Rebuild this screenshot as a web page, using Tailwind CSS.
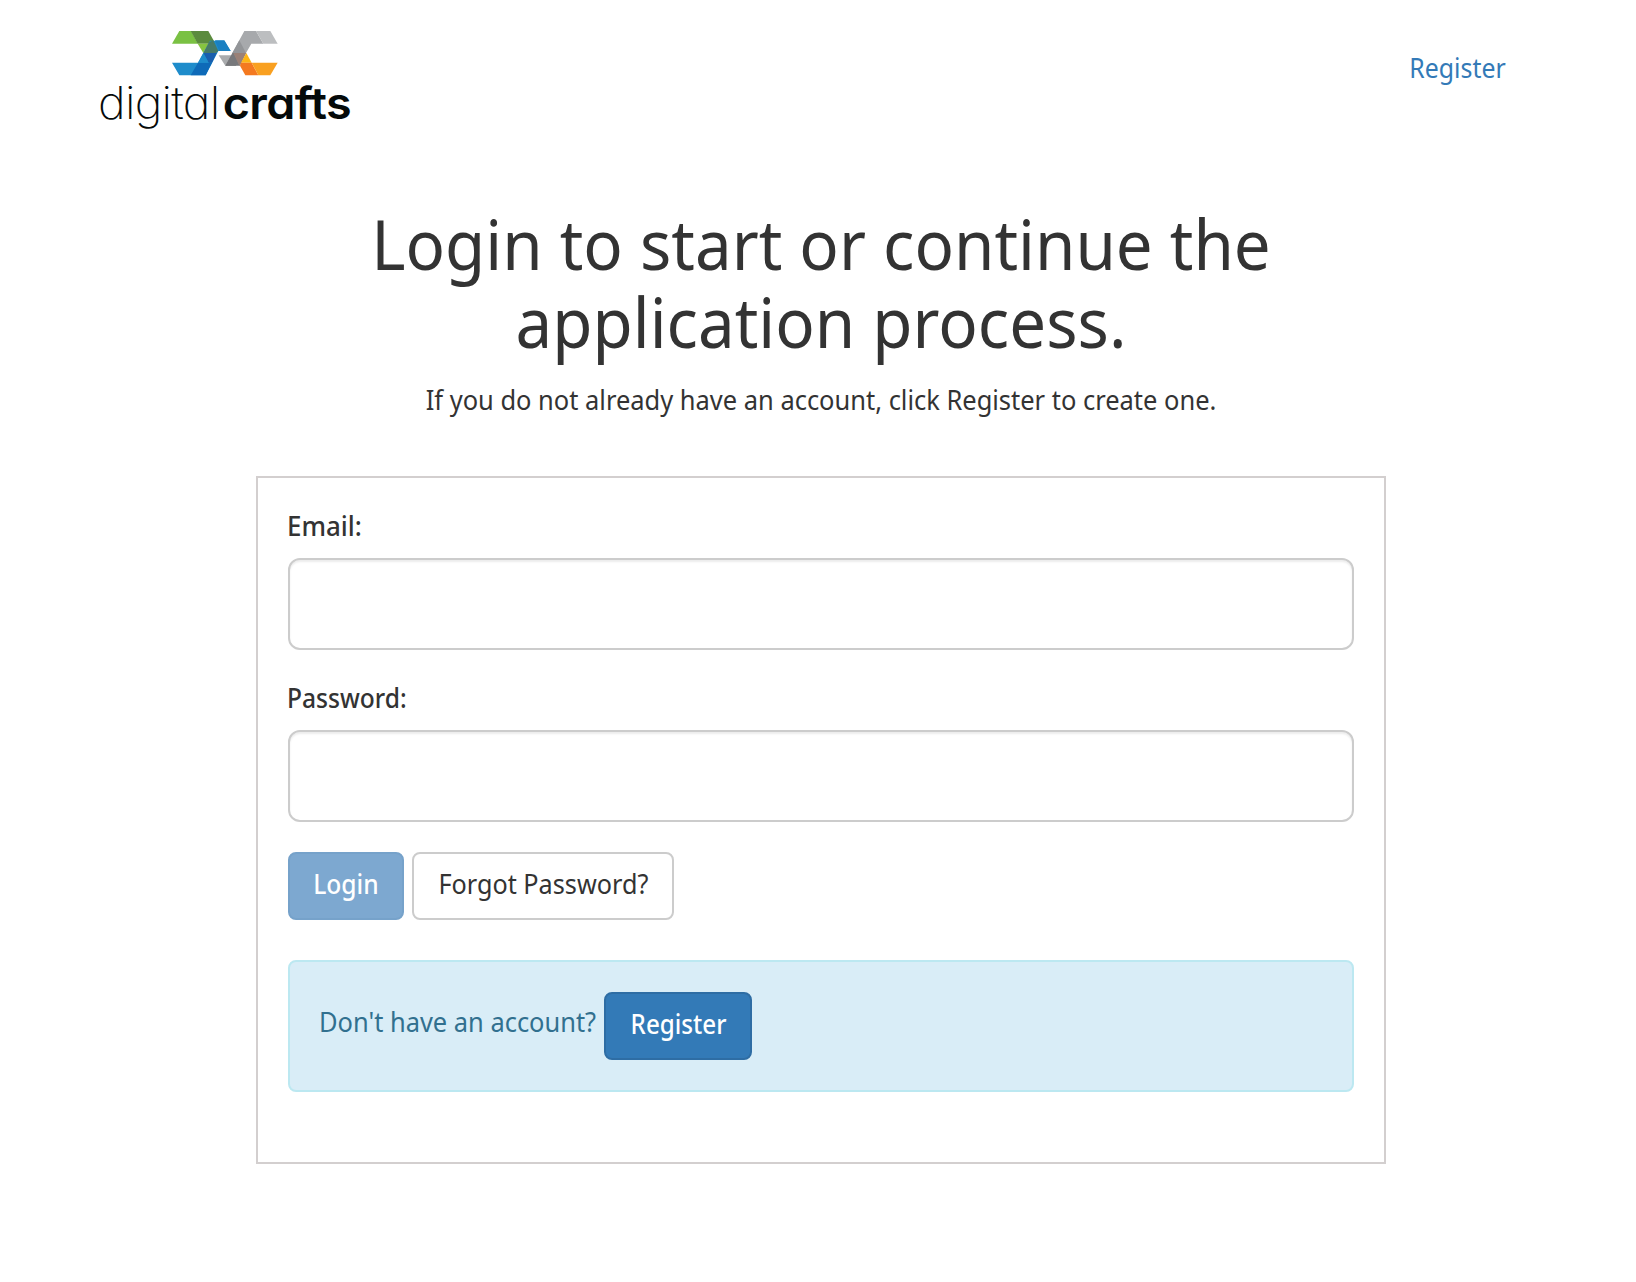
<!DOCTYPE html>
<html lang="en">
<head>
<meta charset="utf-8">
<title>DigitalCrafts Login</title>
<script src="https://cdn.jsdelivr.net/npm/@tailwindcss/browser@4"></script>
</head>
<body class="min-h-screen bg-white text-[27px] leading-[40px] text-[#333] font-['Noto_Sans','Open_Sans',sans-serif]">
  <header class="flex h-[204px] items-start justify-between pl-[98px] pr-[130px]">
    <a class="flex flex-col pt-[30px] text-[#050a0a]" href="#">
      <svg class="ml-[73px] h-[47px] w-[108px]" viewBox="243 30 324 141">
        <path fill="#7ac143" d="M268 33H303L324 71H246Z"/>
        <path fill="#5b8b3e" d="M302 33H355L374 67L358 71H323Z"/>
        <path fill="#86c440" d="M323 71H356L340 99Z"/>
        <path fill="#1e8ccb" d="M268 166L246 128H324L360 62H403L422 93H385L347 166Z"/>
        <path fill="#1a80c2" d="M375 61H403L422 93H388Z"/>
        <path fill="#467a68" d="M357 67L370 61L385 93L378 99H340Z"/>
        <path fill="#1a5fae" d="M340 99H380L366 128H356Z"/>
        <path fill="#0e6ab8" d="M324 128H366L347 166H302Z"/>
        <path fill="#1e8ccb" d="M324 128L340 99L356 128Z"/>
        <path fill="#a7a9ac" d="M463 33H498L520 71H484L468 99H427Z"/>
        <path fill="#939598" d="M448 61L468 99H427Z"/>
        <path fill="#bcbec0" d="M498 33H541L563 71H520Z"/>
        <path fill="#a9abad" d="M386 106H424L406 137Z"/>
        <path fill="#6d6e71" d="M424 106L439 137H406Z"/>
        <path fill="#77787b" d="M427 99H432L450 137H406Z"/>
        <path fill="#9a8177" d="M430 99H469L450 137H448Z"/>
        <path fill="#fdb515" d="M469 99L485 128H453Z"/>
        <path fill="#f47920" d="M453 128H485L505 166H466L450 137Z"/>
        <path fill="#f9a020" d="M485 128H563L541 166H505Z"/>
      </svg>
      <span class="-mt-[2px] origin-left scale-x-[1.05] whitespace-nowrap font-[Inter] text-[44.5px] leading-[56px] [font-feature-settings:'cv11']"><span class="font-[250] tracking-[-0.7px]">digital</span><span class="pl-[3px] font-semibold tracking-[-0.6px]">crafts</span></span>
    </a>
    <a class="origin-right scale-x-[.92] pt-12 text-[#337ab7]" href="#">Register</a>
  </header>

  <main class="ml-[256px] flex w-[1130px] flex-col">
    <h1 class="scale-x-[.935] text-center text-[70px] leading-[78px]">Login to start or continue the<br>application process.</h1>
    <p class="mt-5 scale-x-[.943] text-center">If you do not already have an account, click Register to create one.</p>

    <form class="mt-14 flex h-[688px] flex-col border-2 border-[#d3cfcf] px-[30px] pt-7">
      <label class="-ml-px origin-left scale-x-[.96] font-medium" for="email">Email:</label>
      <input id="email" type="email" class="mt-3 h-[92px] w-full rounded-xl border-2 border-[#ccc] px-6 shadow-[inset_0_2px_2px_rgba(0,0,0,0.075)]">
      <label class="mt-7 -ml-px origin-left scale-x-[.91] font-medium" for="password">Password:</label>
      <input id="password" type="password" class="mt-3 h-[92px] w-full rounded-xl border-2 border-[#ccc] px-6 shadow-[inset_0_2px_2px_rgba(0,0,0,0.075)]">
      <div class="mt-[30px] flex gap-2">
        <button type="button" class="flex h-[68px] w-[116px] items-center justify-center rounded-lg border-2 border-[#76a2ca] bg-[#7da8d0] pb-[5px] text-white"><span class="scale-x-[.91] font-medium">Login</span></button>
        <button type="button" class="flex h-[68px] w-[262px] items-center justify-center rounded-lg border-2 border-[#ccc] bg-white pb-[5px]"><span class="scale-x-[.934] whitespace-nowrap">Forgot Password?</span></button>
      </div>
      <div class="mt-10 flex h-[132px] rounded-lg border-2 border-[#bce8f1] bg-[#d9edf7] py-[30px] pl-[29px] text-[#31708f]">
        <span class="mt-[9.5px] w-[285px] origin-left scale-x-[.942] whitespace-nowrap">Don't have an account?</span>
        <button type="button" class="flex h-[68px] w-[148px] items-center justify-center rounded-lg border-2 border-[#2e6da4] bg-[#337ab7] pb-[5px] text-white"><span class="scale-x-[.895] font-medium">Register</span></button>
      </div>
    </form>
  </main>
</body>
</html>
